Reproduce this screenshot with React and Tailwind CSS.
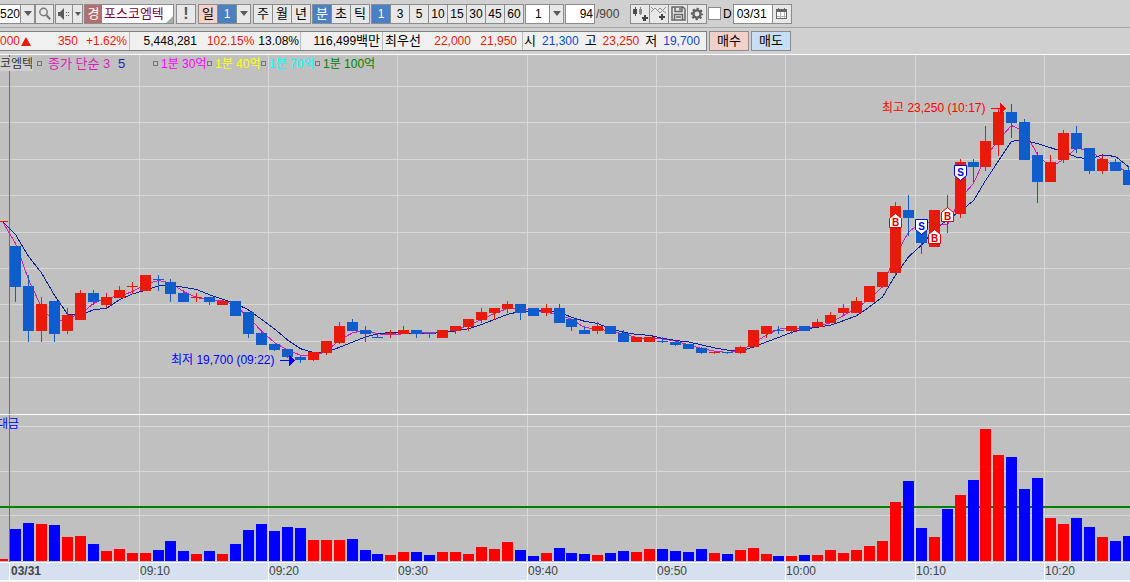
import { useState } from 'react'
import clsx from 'clsx'

const UP = '#e81a0a'
const DOWN = '#115ccc'

// [high, body top, body bottom, low, up, turnover]
const candles = [
  [221, 221, 222, 222, 1, 2],
  [246, 246, 287, 302, 0, 32],
  [275, 286, 331, 342, 0, 38],
  [297, 304, 331, 342, 1, 37],
  [301, 301, 334, 342, 0, 36],
  [308, 315, 331, 334, 1, 24],
  [290, 293, 320, 320, 1, 25],
  [290, 293, 302, 305, 0, 17],
  [293, 297, 305, 308, 1, 10],
  [286, 290, 298, 298, 1, 12],
  [282, 286, 287, 294, 1, 8],
  [275, 275, 291, 291, 1, 8],
  [275, 279, 280, 291, 0, 11],
  [279, 282, 294, 302, 0, 20],
  [290, 293, 302, 302, 0, 10],
  [293, 297, 298, 302, 1, 7],
  [297, 297, 302, 305, 0, 10],
  [301, 301, 305, 305, 1, 7],
  [301, 301, 316, 316, 0, 17],
  [312, 312, 334, 338, 0, 31],
  [330, 333, 345, 345, 0, 37],
  [344, 344, 350, 351, 0, 30],
  [349, 349, 357, 358, 0, 34],
  [356, 357, 360, 363, 0, 33],
  [352, 352, 360, 361, 1, 21],
  [341, 341, 353, 355, 1, 21],
  [322, 326, 343, 344, 1, 21],
  [319, 322, 331, 331, 0, 22],
  [326, 330, 334, 342, 0, 11],
  [333, 337, 338, 338, 0, 7],
  [330, 333, 334, 338, 1, 6],
  [326, 330, 334, 334, 1, 9],
  [330, 330, 334, 338, 0, 9],
  [333, 333, 334, 338, 0, 6],
  [330, 330, 338, 338, 1, 9],
  [326, 326, 331, 334, 1, 9],
  [319, 319, 327, 331, 1, 7],
  [308, 312, 320, 323, 1, 14],
  [308, 308, 313, 320, 1, 12],
  [301, 304, 309, 313, 1, 19],
  [304, 304, 313, 320, 0, 11],
  [308, 308, 316, 316, 0, 5],
  [304, 308, 313, 316, 1, 8],
  [304, 308, 323, 323, 0, 13],
  [319, 319, 327, 331, 0, 8],
  [326, 330, 334, 334, 0, 7],
  [322, 326, 331, 334, 1, 6],
  [326, 326, 334, 334, 0, 8],
  [330, 333, 342, 342, 0, 10],
  [337, 337, 342, 342, 1, 9],
  [337, 337, 342, 342, 1, 12],
  [337, 341, 342, 343, 0, 12],
  [342, 342, 345, 346, 0, 10],
  [344, 344, 349, 349, 0, 9],
  [347, 348, 353, 354, 0, 12],
  [351, 352, 353, 354, 1, 8],
  [352, 352, 353, 354, 0, 7],
  [346, 347, 353, 354, 1, 11],
  [330, 330, 347, 347, 1, 13],
  [326, 326, 334, 338, 1, 7],
  [326, 330, 331, 334, 0, 5],
  [326, 326, 331, 334, 1, 5],
  [326, 326, 331, 331, 0, 6],
  [319, 322, 327, 327, 1, 6],
  [312, 315, 323, 323, 1, 11],
  [304, 308, 313, 316, 1, 8],
  [297, 301, 313, 313, 1, 11],
  [286, 286, 302, 302, 1, 15],
  [272, 272, 287, 287, 1, 20],
  [202, 206, 273, 275, 1, 59],
  [195, 210, 218, 236, 0, 80],
  [225, 228, 243, 254, 0, 33],
  [210, 210, 247, 247, 1, 24],
  [195, 216, 222, 233, 0, 52],
  [159, 162, 214, 218, 1, 66],
  [159, 162, 167, 182, 0, 81],
  [126, 141, 167, 171, 1, 132],
  [108, 112, 145, 156, 1, 106],
  [104, 112, 123, 138, 0, 104],
  [119, 122, 160, 160, 0, 72],
  [152, 155, 182, 203, 0, 83],
  [155, 162, 182, 182, 1, 43],
  [130, 133, 160, 163, 1, 37],
  [126, 133, 149, 153, 0, 43],
  [148, 148, 171, 174, 0, 34],
  [155, 159, 171, 174, 1, 24],
  [159, 162, 171, 171, 0, 20],
  [167, 170, 185, 185, 0, 25],
]

const slotX = (i) => Math.ceil(9.744572 + 12.936143 * (i - 1))

const closes = candles.map(([, top, bottom, , up]) => (up ? top : bottom - 1))

// bars before the session open are flat at the first close
const average = (n) =>
  closes
    .map((_, i) => {
      let sum = 0
      for (let k = 0; k < n; k++) sum += closes[Math.max(0, i - k)]
      return `${slotX(i) + 5.5},${sum / n + 0.5}`
    })
    .join(' ')

const ticks = [
  [139, '09:10'],
  [268, '09:20'],
  [397, '09:30'],
  [527, '09:40'],
  [656, '09:50'],
  [785, '10:00'],
  [915, '10:10'],
  [1044, '10:20'],
]

const marks = [
  ['B', 889, 213],
  ['S', 915, 219],
  ['B', 928, 229],
  ['B', 941, 207],
  ['S', 954, 165],
]

const legend = [
  ['1분 30억', 'text-[#ff00ff]'],
  ['1분 40억', 'text-[#ffff00]'],
  ['1분 70억', 'text-[#00ffff]'],
  ['1분 100억', 'text-[#008000]'],
]

const box = 'h-[20px] shrink-0 border border-[#8c8c8c]'
const cell = `${box} flex items-center justify-center bg-[#e8e8e8]`

const Arrow = () => (
  <svg width="8" height="5" viewBox="0 0 8 5" aria-hidden="true">
    <path d="M0 0h8L4 5z" fill="#5a5a5a" />
  </svg>
)

const Segments = ({ items, value, onChange }) => (
  <div className="flex shrink-0">
    {items.map((item, i) => (
      <button
        key={item}
        onClick={() => onChange(item)}
        className={clsx(
          cell,
          'w-[20px]',
          i > 0 && '-ml-px',
          isNaN(item) ? 'text-[13px]' : 'text-xs',
          value === item && 'bg-[#4a80c4]! text-white'
        )}
      >
        {item}
      </button>
    ))}
  </div>
)

const SearchIcon = () => (
  <svg width="14" height="14" viewBox="0 0 14 14" fill="none" stroke="#777">
    <circle cx="5.5" cy="5" r="3.7" strokeWidth="1.4" />
    <path d="M8.2 8l4 4.2" strokeWidth="2.2" />
  </svg>
)

const SpeakerIcon = () => (
  <svg width="13" height="12" viewBox="0 0 13 12" fill="#5c5c5c">
    <path d="M0 4h2l4-4v12L2 8H0z" />
    <path d="M8 4h1v1H8zM8 7h1v1H8zM10 4h1v1h-1zM10 7h1v1h-1z" />
  </svg>
)

const AddCandleIcon = () => (
  <svg width="16" height="15" viewBox="0 0 16 15" shapeRendering="crispEdges">
    <path d="M1 3h4v5H1zM3 1h1v9H3z" fill="#4c4c4c" />
    <path d="M7 3h3v5H7zM8 1h1v8H8z" fill="#888" />
    <path d="M12 9h1v2h2v1h-2v2h-2v-2h-1v-1h2z" fill="#444" stroke="#444" />
  </svg>
)

const AddLineIcon = () => (
  <svg width="16" height="15" viewBox="0 0 16 15">
    <path d="M0 6l4-4 5 5 6-6M0 1l2 2M6 5l3-3 3 3 3 2" fill="none" stroke="#909090" />
    <path d="M10 8h2v2h2v2h-2v2h-2v-2H8v-2h2z" fill="#444" />
  </svg>
)

const SaveIcon = () => (
  <svg width="15" height="15" viewBox="0 0 15 15" fill="none" stroke="#666" strokeWidth="1.5">
    <path d="M1 1h11l2 2v11H1zM4 1v4.5h7V1M3.5 14V8.5h8V14" />
    <path d="M9 2v2.5M5 11h5" />
  </svg>
)

const GearIcon = () => (
  <svg width="14" height="14" viewBox="0 0 14 14" fill="none" stroke="#606060">
    <circle cx="7" cy="7" r="3.6" strokeWidth="2.4" />
    <circle cx="7" cy="7" r="5.2" strokeWidth="2" strokeDasharray="2.2 1.884" strokeDashoffset="1.1" />
  </svg>
)

const CalendarIcon = () => (
  <svg width="13" height="12" viewBox="0 0 13 12" shapeRendering="crispEdges">
    <path d="M1 1h11v10H1z" fill="#fff" />
    <path d="M5 4v7M9 4v7M1 8h11" stroke="#b4b4b4" />
    <path d="M1 1h11v3H1zM3 0h1v1H3zM9 0h1v1H9zM1 4h1v7H1zM11 4h1v7h-1zM1 10h11v1H1z" fill="#666" />
  </svg>
)

const Toolbar = () => {
  const [period, setPeriod] = useState('분')
  const [minute, setMinute] = useState('1')

  return (
    <div className="flex h-[28px] items-center gap-px overflow-hidden border-b border-[#a6a6a6] whitespace-nowrap">
      <div className="flex shrink-0">
        <input aria-label="화면번호" defaultValue="520" className={`${box} w-[21px] border-l-0 bg-white`} />
        <button aria-label="화면 목록" className={`${cell} -ml-px w-[15px]`}><Arrow /></button>
        <button aria-label="검색" className={`${cell} w-[19px]`}><SearchIcon /></button>
      </div>
      <div className="flex shrink-0">
        <button aria-label="소리" className={`${cell} w-[18px]`}><SpeakerIcon /></button>
        <button aria-label="소리 설정" className={`${cell} -ml-px w-[11px]`}>
          <svg width="6" height="4"><path d="M0 0h6L3 4z" fill="#5a5a5a" /></svg>
        </button>
      </div>
      <div className={`${box} relative flex w-[90px] bg-white`}>
        <span className="flex w-[17px] items-center justify-center bg-[#b07070] text-[13px] text-white">경</span>
        <input aria-label="종목명" defaultValue="포스코엠텍" className="w-[70px] pl-[2px] text-[13px] text-[#800040]" />
        <svg width="7" height="7" className="absolute right-0 bottom-0"><path d="M7 0v7H0z" fill="#aaa" /></svg>
      </div>
      <button className={`${cell} ml-px w-[20px] text-base font-bold text-[#555]`}>!</button>
      <div className="ml-px flex shrink-0">
        <button className={`${cell} w-[20px] bg-[#f6d0ca]! text-[13px]`}>일</button>
        <button className={`${cell} -ml-px w-[20px] bg-[#4a80c4]! text-white`}>1</button>
        <button aria-label="일수" className={`${cell} -ml-px w-[15px]`}><Arrow /></button>
      </div>
      <div className="ml-px flex gap-px">
        <Segments items={['주', '월', '년']} value={period} onChange={setPeriod} />
        <Segments items={['분', '초', '틱']} value={period} onChange={setPeriod} />
        <Segments items={['1', '3', '5', '10', '15', '30', '45', '60']} value={minute} onChange={setMinute} />
      </div>
      <div className="relative shrink-0">
        <select aria-label="분 간격" className={`${box} block w-[39px] appearance-none bg-white pl-[9px]`}>
          <option>1</option>
          <option>3</option>
        </select>
        <span className={`${cell} pointer-events-none absolute top-0 right-0 w-[15px]`}><Arrow /></span>
      </div>
      <input aria-label="조회 개수" defaultValue="94" className={`${box} w-[30px] bg-white pr-px text-right`} />
      <span className="w-[33px] shrink-0 text-[#444]">/900</span>
      <div className="flex shrink-0">
        <button aria-label="봉 추가" className={`${cell} w-[20px]`}><AddCandleIcon /></button>
        <button aria-label="지표 추가" className={`${cell} -ml-px w-[20px]`}><AddLineIcon /></button>
        <button aria-label="저장" className={`${cell} -ml-px w-[20px]`}><SaveIcon /></button>
        <button aria-label="설정" className={`${cell} -ml-px w-[20px]`}><GearIcon /></button>
      </div>
      <label className="flex shrink-0 items-center gap-[2px]">
        <input type="checkbox" className="size-[13px] appearance-none border border-[#8c8c8c] bg-white checked:bg-[#4a80c4]" />
        D
      </label>
      <div className="flex shrink-0">
        <input aria-label="날짜" defaultValue="03/31" className={`${box} w-[40px] bg-white pl-[3px]`} />
        <button aria-label="달력" className={`${cell} -ml-px w-[20px]`}><CalendarIcon /></button>
      </div>
    </div>
  )
}

const QuoteBar = () => (
  <div className="flex h-[27px] items-center gap-[2px] overflow-hidden border-b border-white whitespace-nowrap">
    <div className="flex h-[20px] shrink-0 items-center border border-l-0 border-[#808080] bg-[#f0f0f0] *:flex *:h-full *:items-center *:border-r *:border-[#bbb] *:last:border-r-0">
      <div className="w-[130px] pr-[2px] text-[#e81a0a]">
        <span>000</span>
        <svg width="10" height="9" className="ml-px"><path d="M5 0l5 9H0z" fill={UP} /></svg>
        <span className="ml-auto">350</span>
        <span className="ml-[8px]">+1.62%</span>
      </div>
      <div className="w-[171px] justify-end gap-[4px] pr-px">
        <span className="mr-[6px]">5,448,281</span>
        <span className="text-[#e81a0a]">102.15%</span>
        <span>13.08%</span>
      </div>
      <div className="w-[82px] justify-end pr-[2px]">
        116,499<span className="text-[13px]">백만</span>
      </div>
      <div className="w-[140px] justify-between pr-[5px] pl-[2px]">
        <span className="text-[13px]">최우선</span>
        <span className="ml-[4px] text-[#e81a0a]">22,000</span>
        <span className="text-[#e81a0a]">21,950</span>
      </div>
      <div className="w-[183px] justify-between pr-[6px] pl-px">
        <span className="text-[13px]">시</span>
        <span className="text-[#1048c8]">21,300</span>
        <span className="text-[13px]">고</span>
        <span className="text-[#e81a0a]">23,250</span>
        <span className="text-[13px]">저</span>
        <span className="text-[#1048c8]">19,700</span>
      </div>
    </div>
    <button className={`${box} w-[40px] bg-[#f4d0ca] text-[13px]`}>매수</button>
    <button className={`${box} w-[40px] bg-[#c8def4] text-[13px]`}>매도</button>
  </div>
)

const Mark = ({ type, x, y }) => {
  const buy = type === 'B'
  const color = buy ? '#d80000' : '#0000e0'
  return (
    <g transform={`translate(${x} ${y})`}>
      <path
        d={buy ? 'M.5 14.5V5.5L6.5.5 12.5 5.5V14.5z' : 'M.5.5H12.5V10.5L6.5 15.5.5 10.5z'}
        fill="#fff"
        stroke={color}
      />
      <text x="6.5" y={buy ? 13 : 11} textAnchor="middle" fontSize="10" fontWeight="bold" fill={color}>
        {type}
      </text>
    </g>
  )
}

const GridLines = ({ rows }) => (
  <g fill="#d8d8d8">
    {rows.map((y) => <rect key={y} y={y} width="100%" height="1" />)}
    {ticks.map(([x]) => <rect key={x} x={x} y="0" width="1" height="600" />)}
  </g>
)

const PriceChart = () => (
  <section className="relative border-b border-white">
    <div className="absolute top-0 left-0 flex h-[17px] items-center whitespace-nowrap">
      <span className="w-[33px] bg-[#d0d0d0] leading-[14px] text-[#333]">코엠텍</span>
      <span className="ml-[4px] size-[5px] border border-[#777]" />
      <span className="ml-[6px] w-[70px] text-[13px] text-[#d81cb8]">종가 단순 3</span>
      <span className="w-[35px] text-[13px] text-[#1428a8]">5</span>
      {legend.map(([label, color]) => (
        <span key={label} className="flex w-[54px] items-center gap-[3px]">
          <span className="size-[5px] shrink-0 border border-[#777]" />
          <span className={color}>{label}</span>
        </span>
      ))}
    </div>
    <svg className="block h-[359px] w-full" shapeRendering="crispEdges">
      <g transform="translate(0 -55)">
        <GridLines rows={[86, 122, 159, 195, 232, 268, 304, 341, 377]} />
        <rect x="9" y="55" width="1" height="360" fill="#c84848" />
        <polyline points={average(3)} fill="none" stroke="#d81cb8" />
        <polyline points={average(5)} fill="none" stroke="#0c20a0" />
        {candles.map(([high, top, bottom, low, up], i) => (
          <g key={i} fill={up ? UP : DOWN}>
            <rect x={slotX(i) + 5} y={high} width="1" height={low - high} />
            <rect x={slotX(i)} y={top} width="11" height={bottom - top} />
          </g>
        ))}
        <g shapeRendering="auto">
          {marks.map(([type, x, y]) => <Mark key={x} type={type} x={x} y={y} />)}
        </g>
        <g fill="#0000ff">
          <text x="171" y="364">최저 19,700 (09:22)</text>
          <path d="M280 360h9v-5l6 5.5-6 5.5v-5h-9z" />
        </g>
        <g fill="#ff0000">
          <text x="882" y="112">최고 23,250 (10:17)</text>
          <path d="M991 108h9v-5l6 5.5-6 5.5v-5h-9z" />
        </g>
      </g>
    </svg>
  </section>
)

const TurnoverChart = () => (
  <svg className="block h-[147px] w-full" shapeRendering="crispEdges">
    <GridLines rows={[11, 56, 100, 145]} />
    <rect x="9" width="1" height="147" fill="#c84848" />
    <rect y="91" width="100%" height="2" fill="#008000" />
    {candles.map(([, , , , up, amount], i) => (
      <rect key={i} x={slotX(i)} y={146 - amount} width="11" height={amount} fill={up ? '#ff0000' : '#0000ff'} />
    ))}
    <text x="-3" y="13" fill="#0000ff">대금</text>
  </svg>
)

const TimeAxis = () => (
  <svg className="block h-[19px] w-full border-y border-white bg-[#d6e0ee] text-xs" fill="#444">
    <g fill="#fff">
      <rect x="9" width="1" height="18" />
      {ticks.map(([x]) => <rect key={x} x={x} width="1" height="18" />)}
    </g>
    <text x="11" y="12" fontWeight="bold">03/31</text>
    {ticks.map(([x, label]) => <text key={x} x={x + 1} y="12">{label}</text>)}
  </svg>
)

export default function App() {
  return (
    <main className="min-h-screen overflow-hidden bg-[#d0d0d0] font-['Liberation_Sans','Noto_Sans_CJK_KR',sans-serif] text-xs text-black">
      <Toolbar />
      <QuoteBar />
      <div className="bg-[#c0c0c0]">
        <PriceChart />
        <TurnoverChart />
        <TimeAxis />
      </div>
      <div className="h-px bg-[#eee]" />
    </main>
  )
}
